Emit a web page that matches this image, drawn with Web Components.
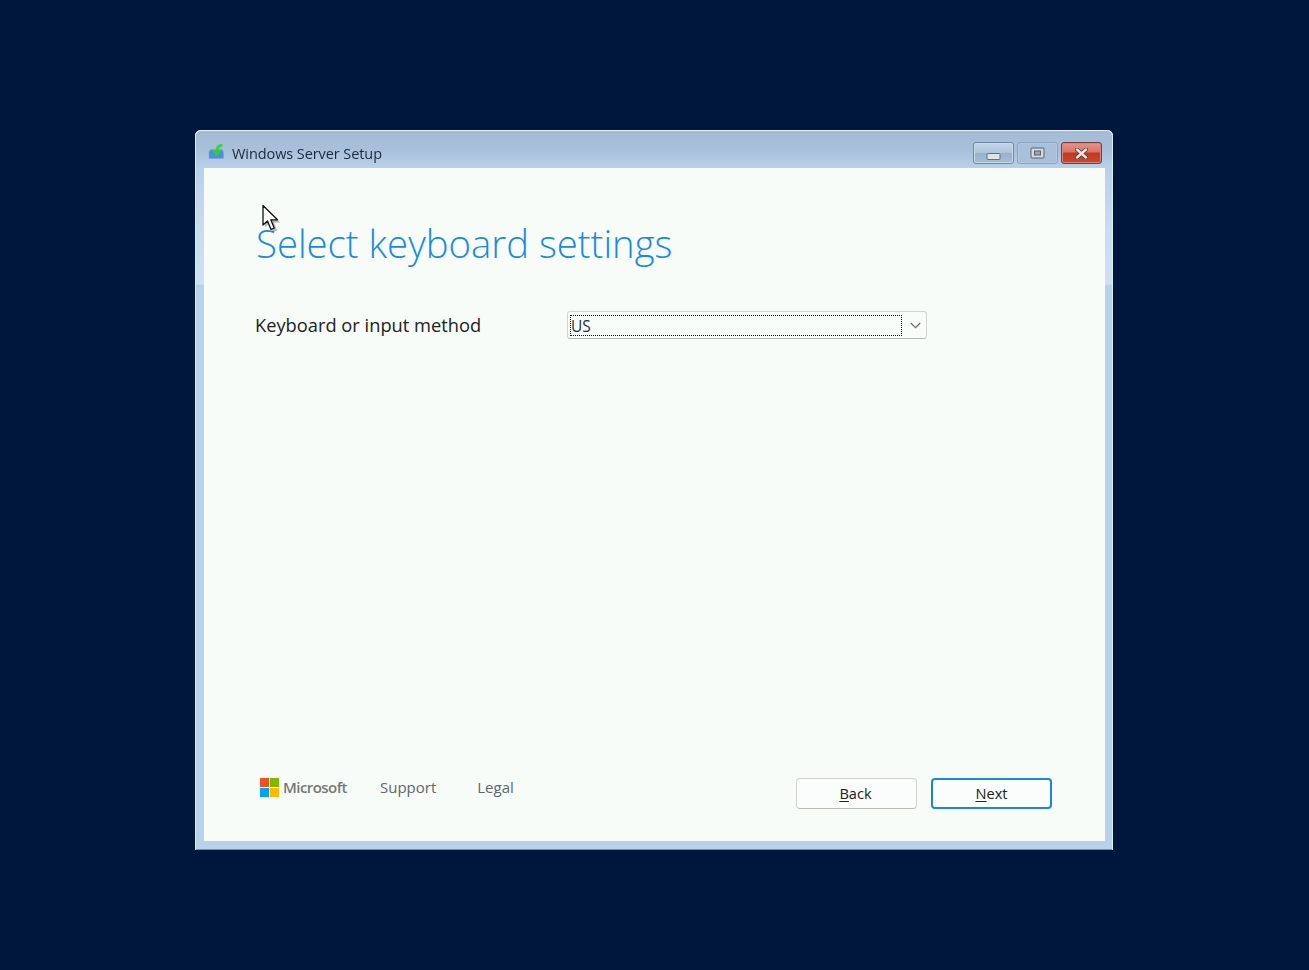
<!DOCTYPE html>
<html lang="en">
<head>
<meta charset="utf-8">
<title>Windows Server Setup</title>
<style>
  html, body { margin: 0; height: 100%; }
  body {
    background: #00173d;
    font-family: "Open Sans", "Noto Sans", sans-serif;
    overflow: hidden;
  }
  setup-desktop { height: 100%; }
</style>
</head>
<body>
<setup-desktop>
  <setup-window caption="Windows Server Setup">
    <keyboard-page heading="Select keyboard settings" label="Keyboard or input method" value="US"></keyboard-page>
  </setup-window>
</setup-desktop>
<script>
class SetupDesktop extends HTMLElement {
  constructor() {
    super();
    this.attachShadow({ mode: "open" });
    this.shadowRoot.innerHTML = `
      <style>
        /* the reference is a scaled VM capture, everything in it is a bit soft */
        :host { display: flex; justify-content: center; padding: 130px 1px 0 0; box-sizing: border-box; position: relative; filter: blur(.35px); }
        .cursor { position: absolute; left: 261px; top: 204px; width: 20px; height: 30px; }
      </style>
      <slot></slot>
      <svg class="cursor" viewBox="0 0 20 30">
        <path d="M4 5 L4 23 L8.5 19.5 L12 28 L16 26.5 L13 18.5 L19 18.5 Z" fill="#000" opacity=".28"/>
        <path d="M2 1.5 L2 21 L6.5 17 L10 25.5 L13.2 24 L9.8 15.8 L16.5 15.8 Z" fill="#fff" stroke="#111" stroke-width="1.3" stroke-linejoin="round"/>
      </svg>
    `;
  }
}
customElements.define("setup-desktop", SetupDesktop);

class SetupWindow extends HTMLElement {
  constructor() {
    super();
    this.attachShadow({ mode: "open" });
    this.shadowRoot.innerHTML = `
      <style>
        :host {
          display: flex;
          flex-direction: column;
          width: 918px;
          height: 720px;
          box-sizing: border-box;
          padding: 0 8px 9px 9px;
          border-radius: 6px 6px 0 0;
          background: linear-gradient(to bottom, #a4bbd5 0, #a9c0da 20px, #b8d0ea 38px, #c9dcf0 100px, #cfe0f2 154px, #b8d2ea 155px, #b8d2ea 100%);
          box-shadow: inset 0 1px 0 #e8eff6, inset 1px 0 0 #dfe8ef, inset -1px 0 0 #d5f0f0, inset 0 -1px 0 #1fb5bf;
        }
        .bar {
          flex: none;
          height: 38px;
          display: flex;
          align-items: flex-start;
          justify-content: space-between;
        }
        .title {
          display: flex;
          align-items: center;
          gap: 8px;
          padding: 12px 0 0 4px;
          font-size: 14.5px;
          color: #1c2a3a;
        }
        .title svg { width: 16px; height: 15px; margin-top: -6px; }
        .title span { line-height: 24px; letter-spacing: -0.08px; }
        .controls { display: flex; gap: 3px; padding: 12px 3px 0 0; }
        .client { flex: 1; background: #f7fcf8; min-height: 0; display: flex; }
      </style>
      <div class="bar">
        <div class="title">
          <svg viewBox="0 0 16 15">
            <path d="M1 8 L2.5 5.5 H14 L15.5 8 V14.5 H1 Z" fill="#4a90da" stroke="#7aa6d2" stroke-width=".5"/>
            <path d="M14.5 1.2 C11 1.4 9 3 9 7" fill="none" stroke="#3ccf55" stroke-width="3.2"/>
            <path d="M3.5 6 H14 L8.8 12.5 Z" fill="#36c64e"/>
          </svg>
          <span></span>
        </div>
        <div class="controls">
          <caption-button kind="min"></caption-button>
          <caption-button kind="max"></caption-button>
          <caption-button kind="close"></caption-button>
        </div>
      </div>
      <div class="client"><slot></slot></div>
    `;
  }
  connectedCallback() {
    this.shadowRoot.querySelector(".title span").textContent = this.getAttribute("caption");
  }
}
customElements.define("setup-window", SetupWindow);

class CaptionButton extends HTMLElement {
  connectedCallback() {
    const kind = this.getAttribute("kind");
    const glyphs = {
      min: `<svg style="margin-top:6px" width="15" height="7" viewBox="0 0 15 7"><rect x="1" y=".5" width="13" height="6" rx="1" fill="#dfe3e6" stroke="#5f6f80"/></svg>`,
      max: `<svg width="15" height="12" viewBox="0 0 15 12"><rect x="1" y="1" width="13" height="10" rx="1" fill="#d5dade" stroke="#56626f"/><rect x="4.5" y="4" width="6" height="4" fill="#92a8c0" stroke="#56626f"/></svg>`,
      close: `<svg width="15" height="11" viewBox="0 0 15 11"><path d="M3 1.5 L12 9.5 M12 1.5 L3 9.5" stroke="#5a3a38" stroke-width="4" stroke-linecap="round"/><path d="M3 1.5 L12 9.5 M12 1.5 L3 9.5" stroke="#e8e4e2" stroke-width="2.4" stroke-linecap="round"/></svg>`,
    };
    this.attachShadow({ mode: "open" });
    this.shadowRoot.innerHTML = `
      <style>
        :host {
          display: flex;
          align-items: center;
          justify-content: center;
          box-sizing: border-box;
          width: 41px;
          height: 22px;
          border-radius: 3px;
          border: 1px solid #7088a8;
          background: linear-gradient(to bottom, #c4d6e8 0, #adc4dc 50%, #97b2cf 52%, #a6bdd6 100%);
          box-shadow: inset 0 0 0 1px #c9d9e8;
        }
        :host([kind="max"]) {
          border-color: #8aa3c0;
          background: #a9c0da;
          box-shadow: inset 0 0 0 1px #b4c9df;
        }
        :host([kind="close"]) {
          border-color: #6f4048;
          background: linear-gradient(to bottom, #e8948a 0, #d97565 45%, #bd3a22 50%, #c9492f 100%);
          box-shadow: inset 0 0 0 1px #dc8478;
        }
        svg { display: block; }
      </style>
      ${glyphs[kind]}
    `;
  }
}
customElements.define("caption-button", CaptionButton);

class KeyboardPage extends HTMLElement {
  connectedCallback() {
    this.attachShadow({ mode: "open" });
    this.shadowRoot.innerHTML = `
      <style>
        :host {
          flex: 1;
          display: flex;
          flex-direction: column;
          box-sizing: border-box;
          padding: 48px 53px 32px 51px;
        }
        h1 {
          margin: 0 0 0 1px;
          font-size: 38.3px;
          line-height: 55px;
          font-weight: 300;
          color: #1b8ae4;
          white-space: nowrap;
        }
        .field {
          display: flex;
          align-items: center;
          margin-top: 39px;
          height: 30px;
          color: #222;
        }
        .field label { width: 312px; font-size: 18.3px; flex: none; padding-bottom: 2px; }
        footer {
          margin-top: auto;
          display: flex;
          justify-content: space-between;
          align-items: flex-end;
        }
      </style>
      <h1></h1>
      <div class="field">
        <label></label>
        <combo-box></combo-box>
      </div>
      <footer>
        <setup-links></setup-links>
        <div style="display:flex;gap:14px">
          <setup-button accel="B" rest="ack"></setup-button>
          <setup-button accel="N" rest="ext" primary></setup-button>
        </div>
      </footer>
    `;
    this.shadowRoot.querySelector("h1").textContent = this.getAttribute("heading");
    this.shadowRoot.querySelector("label").textContent = this.getAttribute("label");
    this.shadowRoot.querySelector("combo-box").setAttribute("value", this.getAttribute("value"));
  }
}
customElements.define("keyboard-page", KeyboardPage);

class ComboBox extends HTMLElement {
  connectedCallback() {
    this.attachShadow({ mode: "open" });
    this.shadowRoot.innerHTML = `
      <style>
        :host {
          display: flex;
          align-items: center;
          box-sizing: border-box;
          width: 360px;
          height: 28px;
          padding: 2px 0 2px 2px;
          background: #f9fdfa;
          border: 1px solid #d0d4d2;
          border-bottom-color: #b4b8b6;
          border-radius: 3px;
        }
        .value {
          flex: none;
          box-sizing: border-box;
          width: 332px;
          height: 21px;
          border: 1px dotted #111;
          font-size: 15.5px;
          line-height: 20px;
          color: #1f2f44;
        }
        .arrow { flex: 1; display: flex; justify-content: center; padding-left: 2px; }
      </style>
      <div class="value">${this.getAttribute("value")}</div>
      <div class="arrow">
        <svg width="11" height="7" viewBox="0 0 11 7"><path d="M0.8 1 L5.5 5.7 L10.2 1" fill="none" stroke="#6a6a6a" stroke-width="1.2"/></svg>
      </div>
    `;
  }
}
customElements.define("combo-box", ComboBox);

class SetupLinks extends HTMLElement {
  connectedCallback() {
    this.attachShadow({ mode: "open" });
    this.shadowRoot.innerHTML = `
      <style>
        :host {
          display: flex;
          align-items: center;
          height: 20px;
          margin: 0 0 12px 5px;
          font-size: 15px;
          color: #5f6670;
        }
        .logo { display: grid; grid-template-columns: 9px 9px; grid-auto-rows: 9px; gap: 1px; margin-right: 4px; }
        .logo i { display: block; }
        .ms { font-weight: 600; letter-spacing: -0.55px; color: #777; margin-right: 33px; }
        .support { margin-right: 41px; }
      </style>
      <div class="logo">
        <i style="background:#f25022"></i><i style="background:#7fba00"></i>
        <i style="background:#00a4ef"></i><i style="background:#ffb900"></i>
      </div>
      <span class="ms">Microsoft</span>
      <span class="support">Support</span>
      <span>Legal</span>
    `;
  }
}
customElements.define("setup-links", SetupLinks);

class SetupButton extends HTMLElement {
  connectedCallback() {
    this.attachShadow({ mode: "open" });
    this.shadowRoot.innerHTML = `
      <style>
        :host {
          display: flex;
          align-items: center;
          justify-content: center;
          box-sizing: border-box;
          width: 121px;
          height: 31px;
          padding: 0 0 1px 0;
          border: 1px solid #cfd2cf;
          border-bottom-color: #b8bbb8;
          border-radius: 4px;
          background: #fafdfb;
          font-size: 14.6px;
          color: #222;
        }
        :host(:not([primary])) { padding-right: 2px; }
        :host([primary]) { border: 2px solid #1c86d8; }
        u { text-underline-offset: 2px; }
      </style>
      <span><u>${this.getAttribute("accel")}</u>${this.getAttribute("rest")}</span>
    `;
  }
}
customElements.define("setup-button", SetupButton);
</script>
</body>
</html>
